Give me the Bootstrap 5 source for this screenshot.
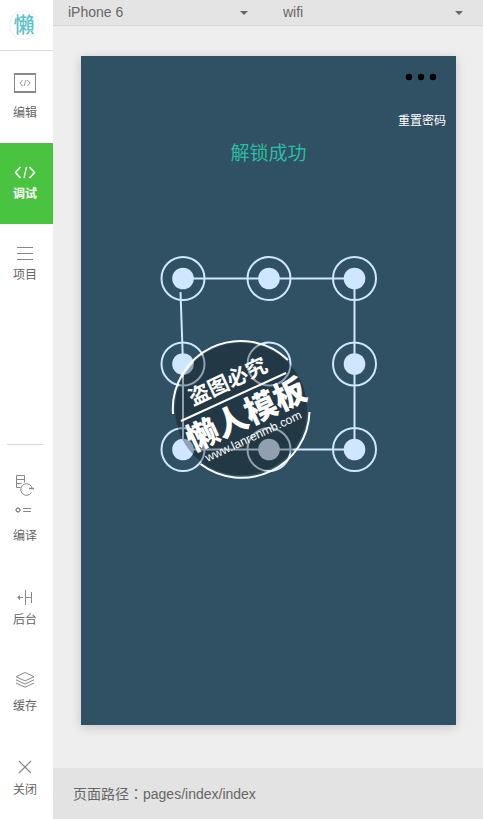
<!DOCTYPE html>
<html lang="zh-CN">
<head>
<meta charset="utf-8">
<meta name="viewport" content="width=device-width, initial-scale=1">
<title>调试</title>
<link href="https://cdn.jsdelivr.net/npm/bootstrap@5.3.0/dist/css/bootstrap.min.css" rel="stylesheet">
<style>
body{font-family:"Liberation Sans","Noto Sans CJK SC",sans-serif;font-size:14px;line-height:20px;color:#666;background:#eee}
.side{width:53px;background:#fff}
.brand{height:51px;padding-right:5px;border-bottom:1px solid #d9d9d9}
.brand a{width:30px;height:30px;border:1px solid #eee;color:#5fc1c9;font-size:21px;line-height:28px;font-weight:500}
.tool{border:0;background:none;color:#666;font-size:12px;line-height:18px;padding:0 3px 0 0}
.tool svg{width:26px;height:24px;fill:none;stroke:#888}
.tool .tall{height:44px}
.tool-edit{height:92px;padding-top:20px;gap:9px}
.tool-std{height:81px;padding-top:18px}
.tool.active{background:#49c340;color:#fff;font-weight:700}
.tool.active svg{stroke:#fff}
.rule{height:1px;background:#d9d9d9;margin:0 10px 28px 7px}
.lower{gap:40px;padding-bottom:20px}
.near{gap:2px}
.apart{gap:4px}
.wide{gap:10px}
.bar{height:26px;background:#e4e4e4;border-bottom:1px solid #d8d8d8}
.bar .form-select{height:25px;padding:0 30px 0 15px;border:0;border-radius:0;color:#666;font-size:14px;line-height:25px;
background:transparent url("data:image/svg+xml,%3Csvg xmlns='http://www.w3.org/2000/svg' viewBox='0 0 8 4'%3E%3Cpath d='M0 0h8L4 4z' fill='%23666'/%3E%3C/svg%3E") no-repeat right 20px center/8px 4px}
.stage{padding:30px 27px 43px 28px}
.phone{background:#305064;box-shadow:0 2px 10px rgba(0,0,0,.18)}
.more{border:0;background:none;padding:16px 19px 0 0;line-height:0}
.more svg{width:32px;height:10px}
.reset{border:0;background:none;color:#fff;font-size:12px;line-height:18px;padding:0;margin:30px 10px 0 0}
.state{color:#2bbd9f;font-size:19px;line-height:28px;margin:10px 0 72px}
.lock{width:100%;max-width:500px}
.lock text{fill:#fff}
.path-bar{height:51px;padding-left:20px;background:#e3e3e3}
.colon{font-family:"Noto Sans CJK TC",sans-serif}
</style>
</head>
<body>
<div class="d-flex min-vh-100">
  <nav class="side d-flex flex-column flex-shrink-0">
    <div class="brand d-flex align-items-center justify-content-center">
      <a href="#" class="rounded-circle text-center text-decoration-none">懶</a>
    </div>
    <button type="button" class="tool tool-edit d-flex flex-column align-items-center">
      <svg viewBox="0 0 26 24"><path d="M2.5 3v18M23.5 3v18"/><path d="M2 3h22M2 21h22" stroke-width="2"/><path d="m10.5 9-2.5 3 2.5 3m5-6 2.5 3-2.5 3M14 9l-2 6" stroke="#999"/></svg>
      <span>编辑</span>
    </button>
    <button type="button" class="tool tool-std active d-flex flex-column align-items-center">
      <svg viewBox="0 0 26 24"><path d="m8.500 6-5 5.500 5 5.500m9-11 5 5.500-5 5.500" stroke-width="1.600"/><path d="m14.500 6-2.500 11" stroke-width="1.300"/></svg>
      <span>调试</span>
    </button>
    <button type="button" class="tool tool-std d-flex flex-column align-items-center">
      <svg viewBox="0 0 26 24"><path d="M5 5.500h16M5 11.500h16M5 17.500h16"/></svg>
      <span>项目</span>
    </button>
    <div class="mt-auto">
      <div class="rule"></div>
      <div class="lower d-flex flex-column">
        <button type="button" class="tool wide d-flex flex-column align-items-center">
          <svg class="tall" viewBox="0 0 26 44"><path d="M8.500 14.500h-4v-12h8v7M4.500 6.500h8M4.500 10.500h5"/><path d="M19.500 19.500a5.800 5.800 0 1 1 .8-3.500"/><path d="M17 15.500h5" stroke-width="1.500"/><path d="M11 35.500h8M11 38.500h8"/><circle cx="6" cy="37" r="1.800"/><path d="M6 34v1.500M6 38.500V40M3 37h1.500M7.500 37H9M4 35l1 1M7 38l1 1M4 39l1-1M7 36l1-1"/></svg>
          <span>编译</span>
        </button>
        <button type="button" class="tool near d-flex flex-column align-items-center">
          <svg viewBox="0 0 26 24"><path d="M13.500 5v15M19.500 7v11M13.500 12.500h6M6 12.500h5"/><path d="M5 12.500 8 10v5z" fill="#888" stroke="none"/></svg>
          <span>后台</span>
        </button>
        <button type="button" class="tool apart d-flex flex-column align-items-center">
          <svg viewBox="0 0 26 24"><path d="m13 3.500 9 4.200-9 4.200-9-4.200zM4 10.800l9 4.200 9-4.200M4 14l9 4.200 9-4.200"/></svg>
          <span>缓存</span>
        </button>
        <button type="button" class="tool near d-flex flex-column align-items-center">
          <svg viewBox="0 0 26 24"><path d="m7 6 12 12M19 6 7 18" stroke-width="1.200"/></svg>
          <span>关闭</span>
        </button>
      </div>
    </div>
  </nav>
  <main class="d-flex flex-column flex-grow-1">
    <div class="bar d-flex">
      <select class="form-select" aria-label="设备"><option>iPhone 6</option></select>
      <select class="form-select" aria-label="网络"><option>wifi</option></select>
    </div>
    <div class="stage d-flex flex-grow-1">
      <section class="phone d-flex flex-column flex-grow-1">
        <button type="button" class="more align-self-end" aria-label="更多"><svg viewBox="0 0 32 10" fill="#000"><circle cx="4" cy="5" r="3.200"/><circle cx="16" cy="5" r="3.200"/><circle cx="28" cy="5" r="3.200"/></svg></button>
        <button type="button" class="reset align-self-end">重置密码</button>
        <div class="state text-center">解锁成功</div>
        <svg class="lock align-self-center" viewBox="81 240 375 250">
          <g fill="none" stroke="#cfe6ff" stroke-width="2">
            <path d="m180.500 292 2.500 72v85.500h171.500V278.500H183"/>
            <circle cx="183" cy="278.500" r="21.500"/><circle cx="269" cy="278.500" r="21.500"/><circle cx="354.500" cy="278.500" r="21.500"/>
            <circle cx="183" cy="364" r="21.500"/><circle cx="269" cy="364" r="21.500"/><circle cx="354.500" cy="364" r="21.500"/>
            <circle cx="183" cy="449.500" r="21.500"/><circle cx="269" cy="449.500" r="21.500"/><circle cx="354.500" cy="449.500" r="21.500"/>
          </g>
          <g fill="#cfe6ff">
            <circle cx="183" cy="278.500" r="10.800"/><circle cx="269" cy="278.500" r="10.800"/><circle cx="354.500" cy="278.500" r="10.800"/>
            <circle cx="183" cy="364" r="10.800"/><circle cx="354.500" cy="364" r="10.800"/>
            <circle cx="183" cy="449.500" r="10.800"/><circle cx="269" cy="449.500" r="10.800"/><circle cx="354.500" cy="449.500" r="10.800"/>
          </g>
          <circle cx="241" cy="409" r="66" fill="#040300" fill-opacity=".31"/>
          <g fill="none" stroke="#fff" stroke-width="2">
            <path d="M173 414a68 68 0 0 1 115-54M309.500 412a68 68 0 0 1-109 52"/>
            <path d="m181 421 105-48"/>
          </g>
          <g text-anchor="middle">
            <text transform="translate(231 388) rotate(-25)" font-size="21" font-weight="700">盗图必究</text>
            <text transform="translate(251 425) rotate(-25)" font-size="32" font-weight="900">懒人模板</text>
            <text transform="translate(255 440) rotate(-25)" font-size="12">www.lanrenmb.com</text>
          </g>
        </svg>
      </section>
    </div>
    <footer class="path-bar d-flex align-items-center"><span>页面路径<span class="colon" lang="zh-TW">：</span>pages/index/index</span></footer>
  </main>
</div>
<script src="https://cdn.jsdelivr.net/npm/bootstrap@5.3.0/dist/js/bootstrap.bundle.min.js"></script>
</body>
</html>
